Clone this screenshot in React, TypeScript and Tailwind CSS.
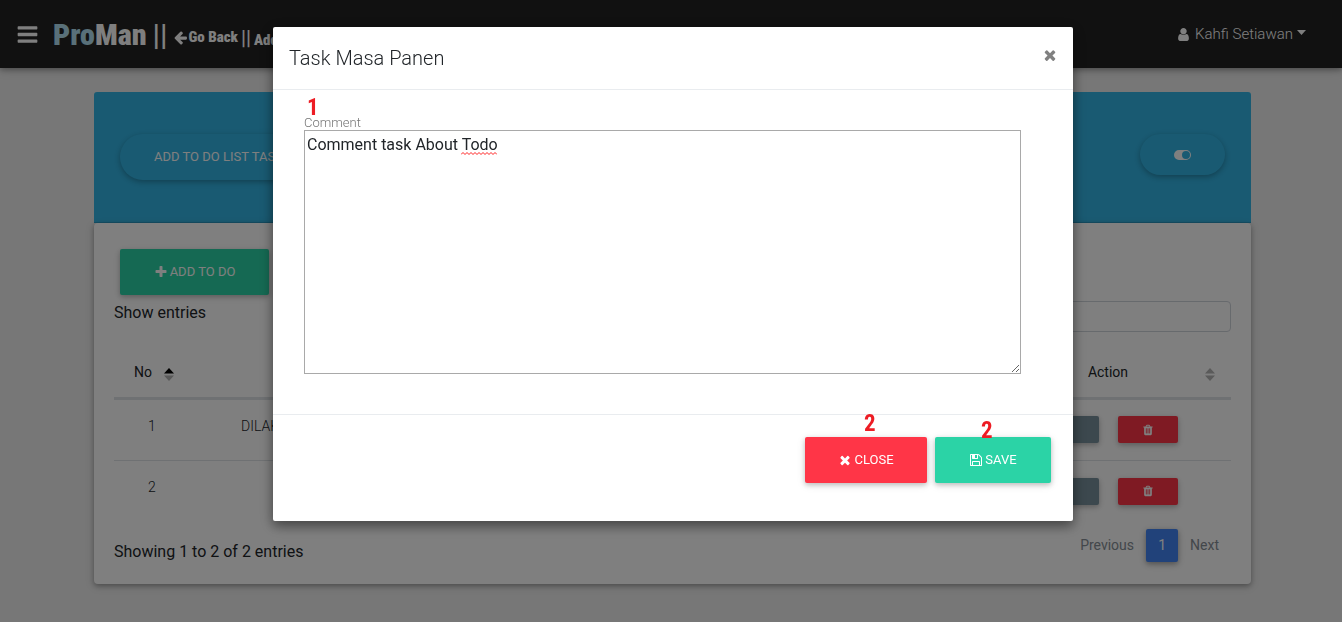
import { useState } from "react";
import type { ReactNode } from "react";
import clsx from "clsx";

const ICONS = {
  bars: "M1664 1344v128q0 26-19 45t-45 19h-1408q-26 0-45-19t-19-45v-128q0-26 19-45t45-19h1408q26 0 45 19t19 45zm0-512v128q0 26-19 45t-45 19h-1408q-26 0-45-19t-19-45v-128q0-26 19-45t45-19h1408q26 0 45 19t19 45zm0-512v128q0 26-19 45t-45 19h-1408q-26 0-45-19t-19-45v-128q0-26 19-45t45-19h1408q26 0 45 19t19 45z",
  plus: "M1600 736v192q0 40-28 68t-68 28h-416v416q0 40-28 68t-68 28h-192q-40 0-68-28t-28-68v-416h-416q-40 0-68-28t-28-68v-192q0-40 28-68t68-28h416v-416q0-40 28-68t68-28h192q40 0 68 28t28 68v416h416q40 0 68 28t28 68z",
  times: "M1490 1322q0 40-28 68l-136 136q-28 28-68 28t-68-28l-294-294-294 294q-28 28-68 28t-68-28l-136-136q-28-28-28-68t28-68l294-294-294-294q-28-28-28-68t28-68l136-136q28-28 68-28t68 28l294 294 294-294q28-28 68-28t68 28l136 136q28 28 28 68t-28 68l-294 294 294 294q28 28 28 68z",
  arrowLeft: "M1664 896v128q0 53-32.5 90.5t-84.5 37.5h-704l293 294q38 36 38 90t-38 90l-75 76q-37 37-90 37-52 0-91-37l-651-652q-37-37-37-90 0-52 37-91l651-650q38-38 91-38 52 0 90 38l75 74q38 38 38 91t-38 91l-293 293h704q52 0 84.5 37.5t32.5 90.5z",
  save: "M512 1536h768v-384h-768v384zm896 0h128v-896q0-14-10-38.5t-20-34.5l-281-281q-10-10-34-20t-39-10v416q0 40-28 68t-68 28h-576q-40 0-68-28t-28-68v-416h-128v1280h128v-416q0-40 28-68t68-28h832q40 0 68 28t28 68v416zm-384-928v-320q0-13-9.5-22.5t-22.5-9.5h-192q-13 0-22.5 9.5t-9.5 22.5v320q0 13 9.5 22.5t22.5 9.5h192q13 0 22.5-9.5t9.5-22.5zm640 32v928q0 40-28 68t-68 28h-1344q-40 0-68-28t-28-68v-1344q0-40 28-68t68-28h928q40 0 88 20t76 48l280 280q28 28 48 76t20 88z",
  trash: "M704 1376v-704q0-14-9-23t-23-9h-64q-14 0-23 9t-9 23v704q0 14 9 23t23 9h64q14 0 23-9t9-23zm256 0v-704q0-14-9-23t-23-9h-64q-14 0-23 9t-9 23v704q0 14 9 23t23 9h64q14 0 23-9t9-23zm256 0v-704q0-14-9-23t-23-9h-64q-14 0-23 9t-9 23v704q0 14 9 23t23 9h64q14 0 23-9t9-23zm-544-992h448l-48-117q-7-9-17-11h-317q-10 2-17 11zm928 32v64q0 14-9 23t-23 9h-96v948q0 83-47 143.5t-113 60.5h-832q-66 0-113-58.5t-47-141.5v-952h-96q-14 0-23-9t-9-23v-64q0-14 9-23t23-9h309l70-167q15-37 54-63t79-26h320q40 0 79 26t54 63l70 167h309q14 0 23 9t9 23z",
  user: "M1536 1399q0 109-62.5 187t-150.5 78h-854q-88 0-150.5-78t-62.5-187q0-85 8.5-160.5t31.5-152 58.5-131 94-89 134.5-34.5q131 128 313 128t313-128q76 0 134.5 34.5t94 89 58.5 131 31.5 152 8.5 160.5zm-256-887q0 159-112.5 271.5t-271.5 112.5-271.5-112.5-112.5-271.5 112.5-271.5 271.5-112.5 271.5 112.5 112.5 271.5z",
};

function Icon({ name, className }: { name: keyof typeof ICONS; className: string }) {
  return (
    <svg viewBox="0 0 1792 1792" fill="currentColor" aria-hidden="true" className={clsx("shrink-0", className)}>
      <path d={ICONS[name]} />
    </svg>
  );
}

const RAISED = "shadow-[0_2px_5px_rgba(0,0,0,0.2),0_2px_10px_rgba(0,0,0,0.1)]";
const MARKER = "absolute font-['Roboto_Condensed','Arial_Narrow','Liberation_Sans',sans-serif] text-[23px] leading-4 font-bold text-[#ed1c24]";

function Button({ className, children, label, onClick }: { className: string; children: ReactNode; label?: string; onClick?: () => void }) {
  return (
    <button
      type="button"
      aria-label={label}
      onClick={onClick}
      className={clsx("flex items-center justify-center gap-[2px] text-[13px] whitespace-nowrap text-white uppercase", RAISED, className)}
    >
      {children}
    </button>
  );
}

function SortIcon({ ascending = false }: { ascending?: boolean }) {
  return (
    <svg viewBox="0 0 10 13" aria-hidden="true" className="absolute right-4 bottom-4 h-[13px] w-[10px]">
      <path d="M0 5.5 5 0l5 5.5z" className={ascending ? "fill-black" : "fill-[#b4b4b4]"} />
      <path d="M0 7.5 5 13l5-5.5z" className="fill-[#b4b4b4]" />
    </svg>
  );
}

const TASKS = [
  { no: 1, status: "DILAKUKAN" },
  { no: 2, status: "" },
];

function Navbar() {
  return (
    <nav className="relative flex h-[68px] items-center justify-between bg-[#222] pr-9 pl-4 text-white shadow-[0_2px_5px_rgba(0,0,0,0.26),0_2px_10px_rgba(0,0,0,0.16)]">
      <div className="flex items-center">
        <button type="button" aria-label="Menu">
          <Icon name="bars" className="size-[23px]" />
        </button>
        <div className="ml-[14px] flex items-baseline gap-[6px] font-['Impact','Roboto_Condensed','Roboto',sans-serif] font-black">
          <a href="#home" className="text-[30px] leading-10">
            <span className="text-[#b3e0f2]">Pro</span>Man
          </a>
          <span className="text-[30px] font-medium">||</span>
          <div className="flex items-baseline gap-[3px] text-[15px]">
            <a href="#back" className="flex items-center">
              <Icon name="arrowLeft" className="size-[15px]" />
              Go Back
            </a>
            <span className="text-[20px] font-medium">||</span>
            <a href="#add">Add Task</a>
          </div>
        </div>
      </div>
      <button type="button" className="flex items-center gap-1 text-[15px] font-light">
        <Icon name="user" className="size-[15px]" />
        Kahfi Setiawan
        <svg viewBox="0 0 9 5" className="mb-1 h-[5px] w-[9px] fill-current" aria-hidden="true">
          <path d="M0 0h9L4.500 5z" />
        </svg>
      </button>
    </nav>
  );
}

function TaskTable() {
  return (
    <table className="w-full table-fixed text-[14px] text-[#212529]">
      <colgroup>
        <col className="w-[76px]" />
        <col className="w-[171px]" />
        <col />
        <col className="w-[246px]" />
      </colgroup>
      <thead>
        <tr className="h-[54px] border-b-[3px] border-[#dee2e6]">
          <th scope="col" className="relative pt-[5px] pr-[18px] font-normal">
            No
            <SortIcon ascending />
          </th>
          <th scope="col" className="pt-[5px] pl-[51px] font-normal">Status</th>
          <th scope="col" className="pt-[5px] font-normal">Todo</th>
          <th scope="col" className="relative pt-[5px] font-normal">
            Action
            <SortIcon />
          </th>
        </tr>
      </thead>
      <tbody className="font-light">
        {TASKS.map((task) => (
          <tr key={task.no} className="h-[62px] border-b border-[#dee2e6] last:border-transparent">
            <td className="pt-4 text-center align-top">{task.no}</td>
            <td className="pt-4 pl-[51px] align-top">{task.status}</td>
            <td />
            <td>
              <div className="flex justify-center gap-[19px]">
                <Button label="Edit task" className="h-[27px] w-[60px] rounded-[2px] bg-[#78909c] pr-2">
                  <Icon name="save" className="size-3" />
                </Button>
                <Button label="Delete task" className="h-[27px] w-[60px] rounded-[2px] bg-[#ff3547]">
                  <Icon name="trash" className="size-3" />
                </Button>
              </div>
            </td>
          </tr>
        ))}
      </tbody>
    </table>
  );
}

function CommentDialog({ onClose }: { onClose: () => void }) {
  const [comment, setComment] = useState("Comment task About Todo");
  return (
    <div className="fixed inset-0 flex items-start justify-center overflow-hidden bg-black/50 pt-[27px] pl-1">
      <div role="dialog" aria-labelledby="dialog-title" className="w-full max-w-[800px] rounded-[2px] bg-white shadow-[0_5px_11px_rgba(0,0,0,0.3),0_4px_15px_rgba(0,0,0,0.25)]">
        <header className="flex h-[63px] items-start justify-between border-b border-[#e9ecef] pt-4 pr-[15px] pl-4">
          <h2 id="dialog-title" className="text-[20px] leading-[30px] font-light text-[#212529]">Task Masa Panen</h2>
          <button type="button" aria-label="Close dialog" onClick={onClose} className="pt-1 text-[#808080]">
            <Icon name="times" className="size-4" />
          </button>
        </header>
        <div className="relative pt-[25px] pr-[52px] pb-10 pl-[31px]">
          <span className={clsx(MARKER, "top-[10px] left-[34px]")}>1</span>
          <label htmlFor="comment" className="block text-[13px] leading-[15px] font-light text-[#757575]">Comment</label>
          <div className="relative">
            <textarea
              id="comment"
              spellCheck={false}
              value={comment}
              onChange={(event) => setComment(event.target.value)}
              className="block h-[244px] w-full border border-[#a9a9a9] p-[2px] text-[16px] leading-6 text-[#212529] outline-none"
            />
            <svg viewBox="0 0 36 3" className="absolute top-[22px] left-[157px] h-[3px] w-[36px]" aria-hidden="true">
              <path d="M0 2.500l2-2 2 2 2-2 2 2 2-2 2 2 2-2 2 2 2-2 2 2 2-2 2 2 2-2 2 2 2-2 2 2 2-2 2 2" fill="none" stroke="#ff2020" strokeWidth="1" />
            </svg>
          </div>
        </div>
        <footer className="flex justify-end gap-2 border-t border-[#e9ecef] pt-[22px] pr-[22px] pb-[38px]">
          <div className="relative">
            <span className={clsx(MARKER, "-top-[21px] left-[59px]")}>2</span>
            <Button onClick={onClose} className="h-[46px] w-[122px] rounded-[2px] bg-[#ff3547]">
              <Icon name="times" className="size-[14px]" />
              Close
            </Button>
          </div>
          <div className="relative">
            <Button className="h-[46px] w-[116px] rounded-[2px] bg-[#2bd3a6]">
              <Icon name="save" className="size-[14px]" />
              Save
            </Button>
            <span className={clsx(MARKER, "-top-[14px] left-[46px]")}>2</span>
          </div>
        </footer>
      </div>
    </div>
  );
}

export default function App() {
  const [open, setOpen] = useState(true);
  return (
    <div className="min-h-screen bg-[#eee] font-['Roboto',sans-serif]">
      <Navbar />
      <main className="pt-6 pr-[91px] pb-[38px] pl-[94px]">
        <div className="flex h-[131px] items-start justify-between rounded-t-[3px] border-b border-[#2a9fcb] bg-[#33b5e5] px-[26px] pt-[42px]">
          <Button className="h-[46px] rounded-full bg-[#33b5e5] px-[34px]">Add to do list task</Button>
          <Button label="Toggle view" className="h-[41px] w-[85px] rounded-full bg-[#33b5e5]">
            <svg viewBox="0 0 17 10" className="h-[10px] w-[17px] fill-current" aria-hidden="true">
              <path fillRule="evenodd" d="M5 0h7a5 5 0 0 1 0 10H5A5 5 0 0 1 5 0zM12 1a4 4 0 1 0 0 8 4 4 0 0 0 0-8z" />
            </svg>
          </Button>
        </div>
        <section className="rounded-[4px] bg-white px-5 pt-[26px] pb-5 shadow-[0_2px_5px_rgba(0,0,0,0.26),0_2px_10px_rgba(0,0,0,0.16)]">
          <div className="pl-[6px]">
            <Button onClick={() => setOpen(true)} className="h-[46px] w-[149px] rounded-[2px] bg-[#2bd3a6]">
              <Icon name="plus" className="size-[14px]" />
              Add to do
            </Button>
          </div>
          <div className="mt-[6px] flex items-start justify-between">
            <p className="text-[16px] leading-6 text-[#212529]">Show entries</p>
            <input type="search" aria-label="Search" className="h-[31px] w-[200px] rounded-[4px] border border-[#ced4da] bg-white px-2 text-sm" />
          </div>
          <div className="mt-3">
            <TaskTable />
          </div>
          <div className="mt-[6px] flex items-start justify-between">
            <p className="pt-[11px] text-[16px] leading-6 text-[#212529]">Showing 1 to 2 of 2 entries</p>
            <div className="flex h-[33px] items-center text-[14px] text-[#868e96]">
              <button type="button" className="px-3">Previous</button>
              <button type="button" className="h-[33px] w-8 rounded-[2px] bg-[#4285f4] text-white shadow-[0_2px_5px_rgba(0,0,0,0.26),0_2px_10px_rgba(0,0,0,0.16)]">1</button>
              <button type="button" className="px-3">Next</button>
            </div>
          </div>
        </section>
      </main>
      {open && <CommentDialog onClose={() => setOpen(false)} />}
    </div>
  );
}
